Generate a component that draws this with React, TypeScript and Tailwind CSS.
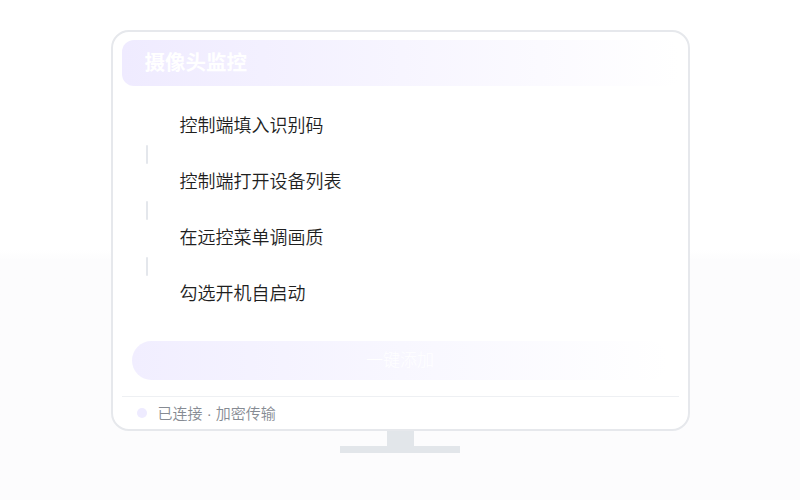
const steps = ['控制端填入识别码', '控制端打开设备列表', '在远控菜单调画质', '勾选开机自启动']

export default function App() {
  return (
    <div
      className="w-full h-[500px] bg-gradient-to-b from-white from-50% to-[#fcfcfd] to-52% flex flex-col items-center pt-[30px]"
      style={{ fontFamily: '"Liberation Sans", "Noto Sans CJK SC", sans-serif' }}
    >
      {/* Monitor */}
      <div className="w-[579px] h-[401px] bg-white border-2 border-[#e6e8ec] rounded-[18px] px-[9px] pt-[8px] flex flex-col">
        <div className="h-[46px] rounded-xl bg-gradient-to-r from-[#efebff] via-[#f7f5ff] to-transparent flex items-center pl-[23px]">
          <span className="text-[20.5px] font-bold text-white leading-none">摄像头监控</span>
        </div>

        <div className="flex flex-col mt-[28px]">
          {steps.map((s, i) => (
            <div key={s}>
              <div className="h-[24px] flex items-center pl-[58px] text-[18px] font-[350] text-[#1f1f1f] leading-none">{s}</div>
              {i < steps.length - 1 && (
                <div className="h-[32px] flex items-center pl-[24px]">
                  <div className="w-[2px] h-[19px] bg-[#e4e7ec] rounded-full" />
                </div>
              )}
            </div>
          ))}
        </div>

        <div className="mt-[35px] mx-[10px] h-[39px] rounded-full bg-gradient-to-r from-[#f1eeff] via-[#f8f7ff] to-transparent flex items-center justify-center">
          <span className="text-[17px] font-light text-white leading-none">一键添加</span>
        </div>

        <div className="mt-[16px] border-t border-[#eef0f3] flex-1 flex items-center pl-[15px] gap-[11px]">
          <div className="w-[10px] h-[10px] rounded-full bg-[#eeebff]" />
          <span className="text-[15px] font-[350] text-[#868b93] leading-none">已连接 · 加密传输</span>
        </div>
      </div>

      {/* Stand */}
      <div className="w-[27px] h-[15px] bg-[#e2e6ea]" />
      <div className="w-[120px] h-[7px] bg-[#e2e6ea]" />
    </div>
  )
}
